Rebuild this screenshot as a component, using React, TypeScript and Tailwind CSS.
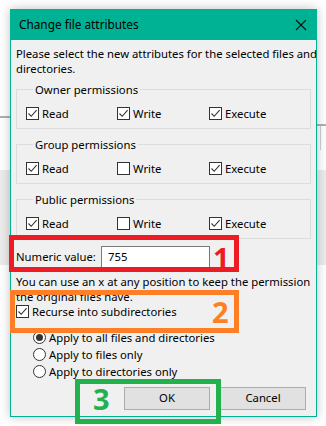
import React from "react";

// Dialog "Change file attributes" with annotation boxes drawn over it.

const FONT = { fontFamily: '"Noto Sans", "Segoe UI", Arial, sans-serif' };
const DIGIT = { fontFamily: '"Open Sans", sans-serif' };

function Check({ on }: { on: boolean }) {
  return (
    <span className="flex h-[13px] w-[13px] shrink-0 items-center justify-center border border-[#333] bg-white">
      {on && (
        <svg width="11" height="11" viewBox="0 0 11 11" aria-hidden>
          <path d="M1.5 5.5 L4.2 8.3 L9.6 2.2" fill="none" stroke="#333" strokeWidth="1.1" />
        </svg>
      )}
    </span>
  );
}

function Radio({ on }: { on: boolean }) {
  return (
    <span className="flex h-[13px] w-[13px] shrink-0 items-center justify-center rounded-full border border-[#333] bg-white">
      {on && <span className="h-[7px] w-[7px] rounded-full bg-[#333]" />}
    </span>
  );
}

function Perm({ title, r, w, x }: { title: string; r: boolean; w: boolean; x: boolean }) {
  const items: [string, boolean][] = [
    ["Read", r],
    ["Write", w],
    ["Execute", x],
  ];
  return (
    <fieldset className="mx-[5px] border border-[#dcdcdc] pb-[7px] pl-[9px] pt-[9px]">
      <legend className="ml-[7px] px-[2px] leading-[15px]">{title}</legend>
      <div className="grid grid-cols-[91px_92px_auto] leading-[15px]">
        {items.map(([label, on]) => (
          <label key={label} className="flex items-center gap-[3px]">
            <Check on={on} />
            <span>{label}</span>
          </label>
        ))}
      </div>
    </fieldset>
  );
}

export default function App() {
  return (
    <div className="relative h-[426px] w-[326px] overflow-hidden bg-white text-[11.3px] text-black" style={FONT}>
      {/* window behind the dialog */}
      <div className="absolute left-0 top-[116px] h-[2px] w-[12px] bg-[#b0b0b0]" />
      <div className="absolute right-0 top-[124px] h-[2px] w-[12px] bg-[#b0b0b0]" />
      <div className="absolute right-[5px] top-[126px] h-[24px] w-[1px] bg-[#d0d0d0]" />
      <div className="absolute left-0 top-[170px] h-[95px] w-full bg-[#ececec]" />

      <div className="relative ml-[10px] mt-[9px] flex h-[408px] w-[307px] flex-col border border-[#00b294] bg-[#f0f0f0] shadow-[0_0_10px_rgba(0,0,0,0.25)]">
        <div className="flex h-[30px] shrink-0 items-center justify-between bg-[#00b294] pl-[8px] pr-[9px]">
          <span className="text-[11.8px]">Change file attributes</span>
          <svg width="12" height="12" viewBox="0 0 12 12" aria-hidden>
            <path d="M1 1 L11 11 M11 1 L1 11" stroke="#111" strokeWidth="1.1" />
          </svg>
        </div>

        <div className="flex flex-1 flex-col">
          <p className="whitespace-nowrap pl-[5px] pt-[6px] leading-[15px]">
            Please select the new attributes for the selected files and
            <br />
            directories.
          </p>

          <div className="mt-[6px] flex flex-col gap-[8px]">
            <Perm title="Owner permissions" r w x />
            <Perm title="Group permissions" r w={false} x />
            <Perm title="Public permissions" r w={false} x />
          </div>

          <div className="mt-[7px] flex items-center px-[5px]">
            <span className="w-[85px]">Numeric value:</span>
            <div className="flex h-[23px] w-[109px] items-center border border-[#7a7a7a] bg-white pl-[6px]">755</div>
          </div>

          <p className="mt-[5px] whitespace-nowrap pl-[5px] leading-[15px]">
            You can use an x at any position to keep the permission
            <br />
            the original files have.
          </p>

          <label className="flex items-center gap-[3px] px-[5px] leading-[15px]">
            <Check on />
            <span>Recurse into subdirectories</span>
          </label>

          <div className="mt-[11px] flex flex-col gap-[2px] pl-[22px] leading-[15px]">
            <label className="flex items-center gap-[3px]">
              <Radio on />
              <span>Apply to all files and directories</span>
            </label>
            <label className="flex items-center gap-[3px]">
              <Radio on={false} />
              <span>Apply to files only</span>
            </label>
            <label className="flex items-center gap-[3px]">
              <Radio on={false} />
              <span>Apply to directories only</span>
            </label>
          </div>

          <div className="mt-auto flex justify-end gap-[10px] pb-[6px] pr-[10px]">
            <button type="button" className="h-[23px] w-[86px] border border-[#adadad] bg-[#e1e1e1]">
              OK
            </button>
            <button type="button" className="h-[23px] w-[86px] border border-[#adadad] bg-[#e1e1e1]">
              Cancel
            </button>
          </div>
        </div>
      </div>

      {/* annotations */}
      <div className="absolute left-[9px] top-[235px] h-[37px] w-[230px] border-[5px] border-[#ed1c24]" />
      <span className="absolute left-[213px] top-[240px] text-[29px] font-bold leading-[36px] text-[#ed1c24]" style={DIGIT}>
        1
      </span>
      <div className="absolute left-[10px] top-[290px] h-[43px] w-[229px] border-[5px] border-[#ff7f27]" />
      <span className="absolute left-[212px] top-[294px] text-[29px] font-bold leading-[36px] text-[#ff7f27]" style={DIGIT}>
        2
      </span>
      <div className="absolute left-[75px] top-[379px] h-[45px] w-[146px] border-[5px] border-[#22b14c]" />
      <span className="absolute left-[93px] top-[381px] text-[29px] font-bold leading-[36px] text-[#22b14c]" style={DIGIT}>
        3
      </span>
    </div>
  );
}
